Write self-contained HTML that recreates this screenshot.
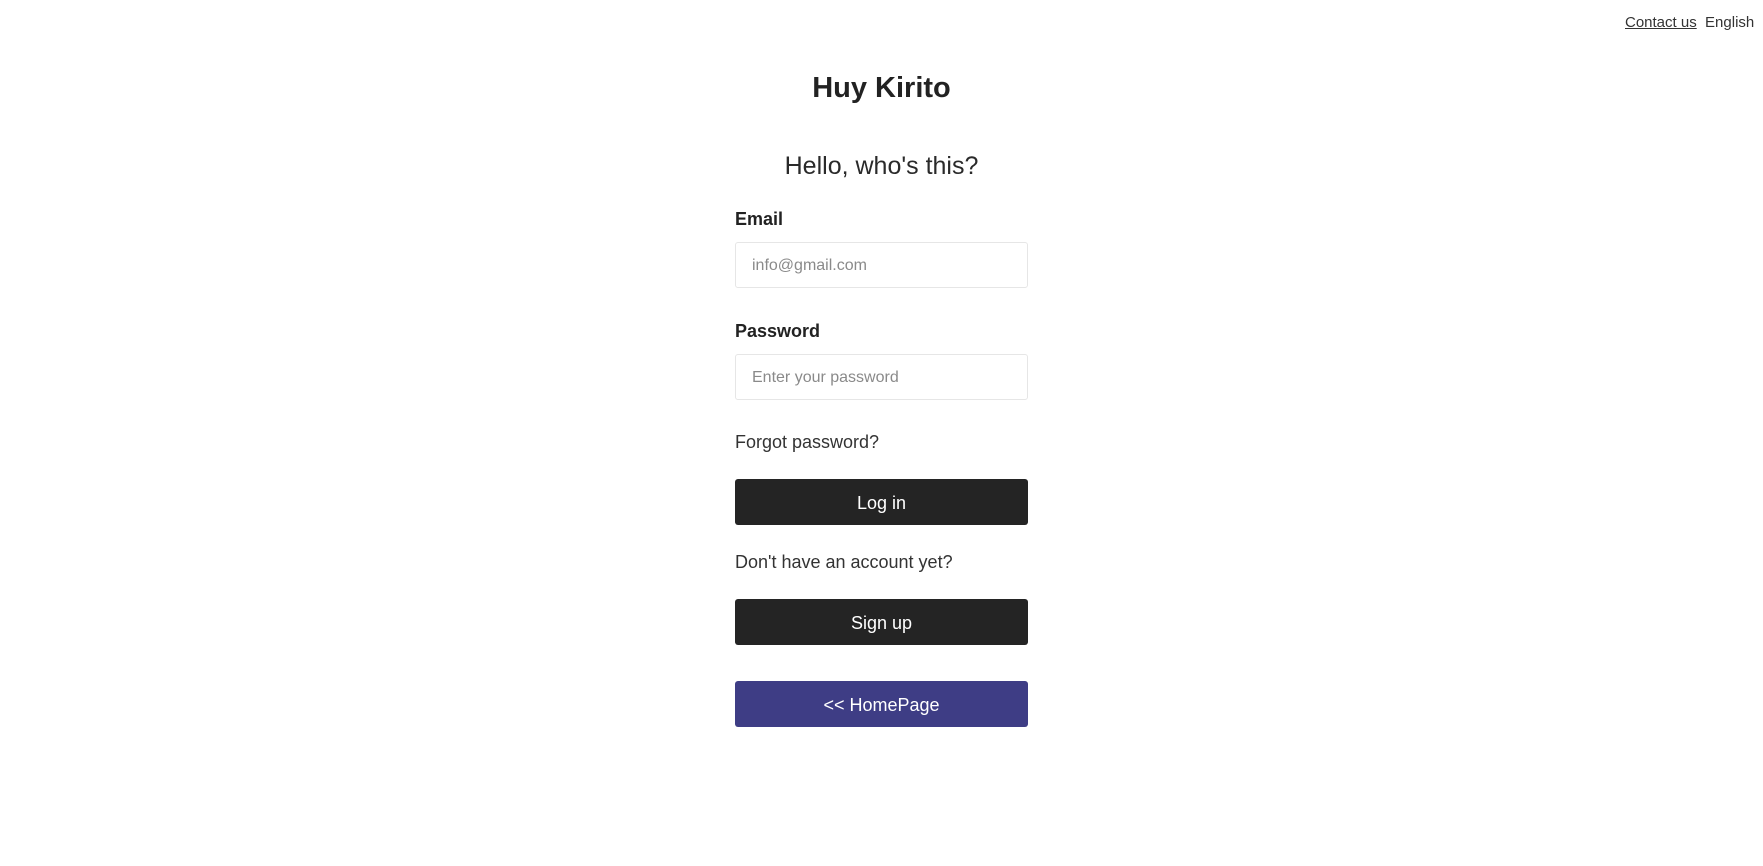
<!DOCTYPE html>
<html><head><meta charset="utf-8"><style>
body{margin:0;width:1763px;height:866px;background:#fff;font-family:"Liberation Sans",Arial,sans-serif;color:#222;position:relative;overflow:hidden}
.a{position:absolute;white-space:nowrap}
.c{left:0;width:1763px;text-align:center}
.inp{position:absolute;left:735px;width:291px;height:44px;border:1px solid #e6e6e6;border-radius:3px;color:#8a8a8a;font-size:16px;line-height:45px;text-indent:16px}
.btn{position:absolute;left:735px;width:293px;height:46px;border-radius:3px;background:#242424;color:#fff;font-size:18px;line-height:48px;text-align:center}
.lbl{font-weight:bold;font-size:18px}
.t{font-size:18px;color:#333}
</style></head><body>
<div class="a" style="left:1625px;top:14px;font-size:15px;color:#333"><span style="text-decoration:underline">Contact us</span>&nbsp; English</div>
<div class="a c" style="top:72px;font-size:29px;font-weight:bold">Huy Kirito</div>
<div class="a c" style="top:152px;font-size:25px;color:#2a2a2a">Hello, who's this?</div>
<div class="a lbl" style="left:735px;top:209px">Email</div>
<div class="inp" style="top:242px">info@gmail.com</div>
<div class="a lbl" style="left:735px;top:321px">Password</div>
<div class="inp" style="top:354px">Enter your password</div>
<div class="a t" style="left:735px;top:432px">Forgot password?</div>
<div class="btn" style="top:479px">Log in</div>
<div class="a t" style="left:735px;top:552px">Don't have an account yet?</div>
<div class="btn" style="top:599px">Sign up</div>
<div class="btn" style="top:681px;background:#3e3d85">&lt;&lt; HomePage</div>
</body></html>
